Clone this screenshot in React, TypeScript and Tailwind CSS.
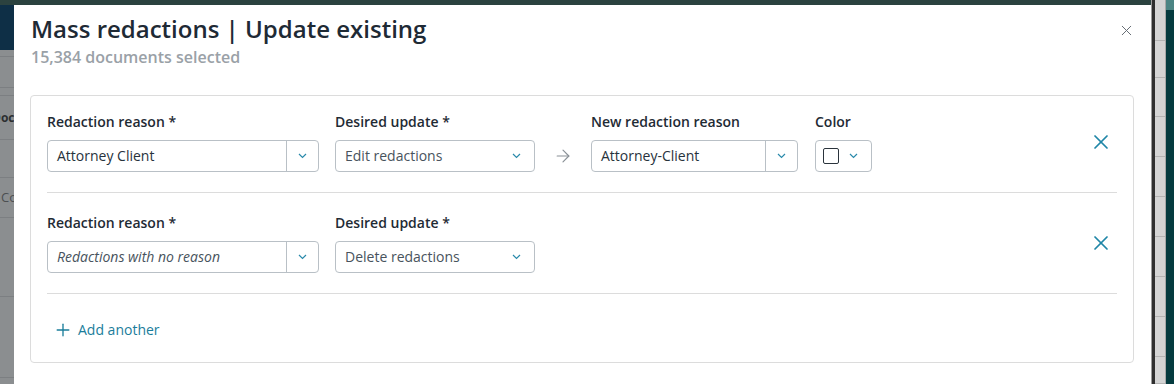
import React from "react";
import { ArrowRight, Plus, X } from "lucide-react";

const Chevron = () => (
  <svg width="9" height="6" viewBox="0 0 9 6" fill="none">
    <path d="M1 1l3.5 3.5L8 1" stroke="#2a8aab" strokeWidth="1.2" />
  </svg>
);

type SelectProps = {
  value: string;
  width: string;
  split?: boolean;
  muted?: boolean;
  italic?: boolean;
};

const Select = ({ value, width, split, muted, italic }: SelectProps) => (
  <div
    className={`flex h-8 items-center rounded border border-[#b9c0c6] bg-white ${width}`}
  >
    <span
      className={`flex-1 truncate pl-[9px] text-sm ${
        muted ? "text-[#48535d]" : "text-[#27323c]"
      } ${italic ? "italic" : ""}`}
    >
      {value}
    </span>
    {split ? (
      <div className="flex h-full w-8 items-center justify-center border-l border-[#b9c0c6]">
        <Chevron />
      </div>
    ) : (
      <div className="flex h-full w-[35px] items-center justify-center">
        <Chevron />
      </div>
    )}
  </div>
);

const Field = ({
  label,
  children,
}: {
  label: string;
  children: React.ReactNode;
}) => (
  <div className="flex flex-col">
    <label className="mb-2 text-sm leading-5 font-semibold text-[#1f2b35]">
      {label}
    </label>
    {children}
  </div>
);

const RemoveButton = () => (
  <button className="mr-[4px] flex h-6 w-6 items-center justify-center text-[#1f86a7]">
    <X size={24} strokeWidth={1.7} />
  </button>
);

const App = () => {
  const leftRows = [
    { h: "h-[7px]", text: "" },
    { h: "h-[31px]", text: "" },
    { h: "h-[8px]", text: "" },
    { h: "h-[44px]", text: "Docu", bold: true },
    { h: "h-[38px]", text: "" },
    { h: "h-[40px]", text: "Coding" },
    { h: "h-[79px]", text: "" },
    { h: "h-[81px]", text: "" },
  ];

  return (
    <div className="flex h-[384px] w-[1174px] overflow-hidden bg-white font-['Open_Sans',sans-serif]">
      <div className="flex w-[1151px] flex-col">
        {/* top app bar peeking out */}
        <div className="h-[5px] shrink-0 bg-[#2b423f]" />

        <div className="flex flex-1">
          {/* dimmed page behind the modal */}
          <div className="flex w-[14px] shrink-0 flex-col bg-[#8b8e90]">
            <div className="h-[45px] bg-[#0e2f46]" />
            {leftRows.map((row, i) => (
              <div
                key={i}
                className={`flex items-center overflow-hidden whitespace-nowrap border-b border-[#7c7f82] ${row.h}`}
              >
                {row.text && (
                  <span
                    className={
                      row.bold
                        ? "ml-[-8px] text-xs font-bold text-[#2c2f31]"
                        : "ml-px text-[13px] text-[#4c4f52]"
                    }
                  >
                    {row.text}
                  </span>
                )}
              </div>
            ))}
          </div>

          {/* MODAL */}
          <div className="flex-1 bg-white pt-2 pr-[17px] pl-4">
            <div className="flex items-start justify-between">
              <div className="pl-px">
                <h1 className="text-2xl leading-8 font-semibold text-[#1e2a35]">
                  Mass redactions | Update existing
                </h1>
                <p className="text-base leading-6 font-semibold text-[#9aa1a7]">
                  15,384 documents selected
                </p>
              </div>
              <button className="mt-[9px] mr-[-1px] text-[#656c73]">
                <X size={17} strokeWidth={1.4} />
              </button>
            </div>

            <div className="mt-[26px] rounded border border-[#dcdcdc] px-4">
              {/* ROW 1 */}
              <div className="flex items-center border-b border-[#dcdcdc] pt-4 pb-5">
                <Field label="Redaction reason *">
                  <Select value="Attorney Client" width="w-[272px]" split />
                </Field>
                <div className="ml-4">
                  <Field label="Desired update *">
                    <Select value="Edit redactions" width="w-[200px]" muted />
                  </Field>
                </div>
                <div className="flex w-[56px] justify-center pt-[28px] text-[#899096]">
                  <ArrowRight size={20} strokeWidth={1.4} />
                </div>
                <Field label="New redaction reason">
                  <Select value="Attorney-Client" width="w-[207px]" split />
                </Field>
                <div className="ml-[17px]">
                  <Field label="Color">
                    <div className="flex h-8 w-[57px] items-center rounded border border-[#b9c0c6] bg-white pl-[7px]">
                      <span className="h-4 w-4 rounded-[2px] border-[1.5px] border-[#2b343c]" />
                      <span className="ml-[10px]">
                        <Chevron />
                      </span>
                    </div>
                  </Field>
                </div>
                <div className="flex-1" />
                <RemoveButton />
              </div>

              {/* ROW 2 */}
              <div className="flex items-center border-b border-[#dcdcdc] pt-5 pb-5">
                <Field label="Redaction reason *">
                  <Select
                    value="Redactions with no reason"
                    width="w-[272px]"
                    split
                    muted
                    italic
                  />
                </Field>
                <div className="ml-4">
                  <Field label="Desired update *">
                    <Select value="Delete redactions" width="w-[200px]" muted />
                  </Field>
                </div>
                <div className="flex-1" />
                <RemoveButton />
              </div>

              {/* ADD ANOTHER */}
              <div className="pt-[26px] pb-[22px]">
                <button className="flex items-center gap-[5px] text-sm leading-5 text-[#1a7d9b]">
                  <span className="ml-[6px]">
                    <Plus size={20} strokeWidth={1.6} />
                  </span>
                  Add another
                </button>
              </div>
            </div>
          </div>
        </div>
      </div>

      {/* right edge: scrollbar and page behind */}
      <div className="flex w-[23px] shrink-0">
        <div className="w-px bg-[#9c9c9c]" />
        <div className="w-[3px] bg-[#2f2f2f]" />
        <div className="flex w-[10px] flex-col bg-[#d4d4d4]">
          {[41, 37, 39, 40, 40, 40, 40, 40, 40, 27].map((h, i) => (
            <div
              key={i}
              className="shrink-0 border-b border-[#b4b4b4]"
              style={{ height: h }}
            />
          ))}
        </div>
        <div className="w-px bg-[#a8a8a8]" />
        <div className="flex flex-1 flex-col bg-[#053b3f]">
          <div className="h-[10px] bg-[#4c8584]" />
        </div>
      </div>
    </div>
  );
};

export default App;
